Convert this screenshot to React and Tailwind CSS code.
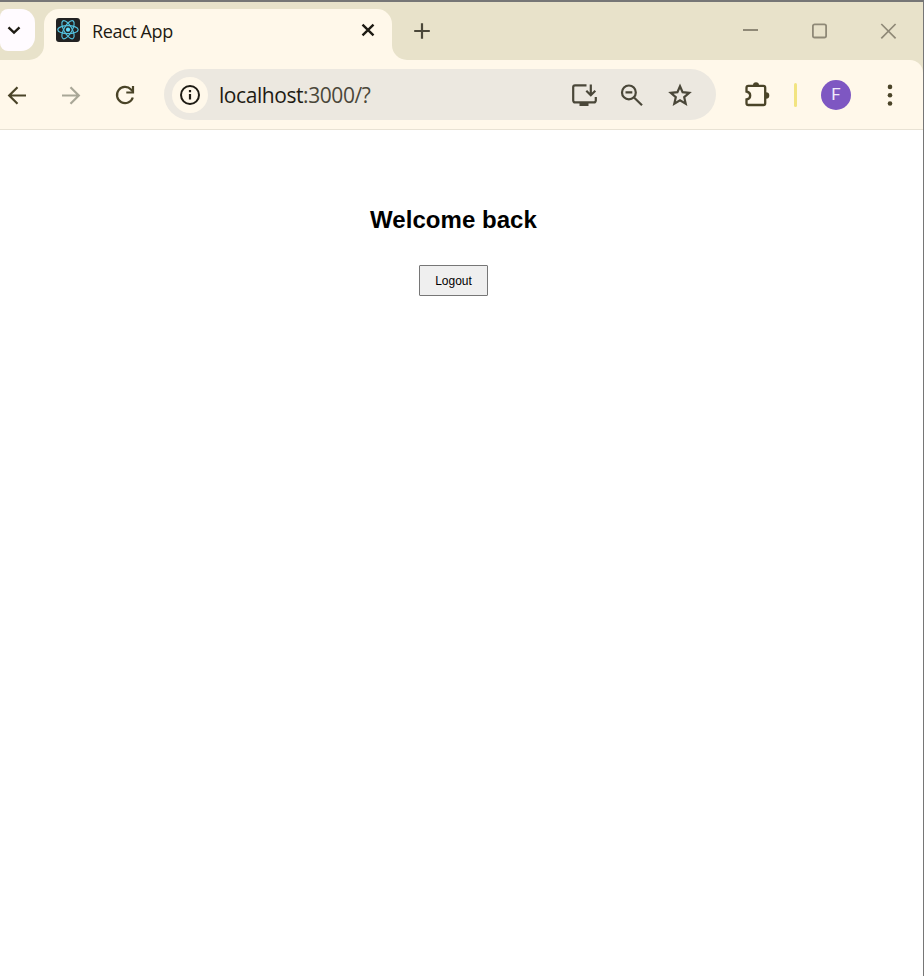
import React from "react";

function Icon({ box, className, children, color = "#4a4428", width = 2.2 }) {
  return (
    <svg
      viewBox={box}
      className={`block shrink-0 ${className}`}
      fill="none"
      stroke={color}
      strokeWidth={width}
    >
      {children}
    </svg>
  );
}

function TabStrip() {
  return (
    <div className="flex h-[58px] bg-[#fff8ea]">
      <div className="w-11 shrink-0 rounded-br-[15px] bg-[#e8e2ca] pt-[7px]">
        <button className="flex h-[42px] w-[35px] items-center rounded-r-[14px] rounded-l-[8px] bg-[#fffbff] pl-[6px]">
          <Icon box="0 0 16 16" className="size-4" color="#1e1b13" width={2.4}>
            <path d="M2.5 5.3 8 10.5l5.5-5.2" />
          </Icon>
        </button>
      </div>
      <div className="w-[348px] shrink-0 bg-[#e8e2ca] pt-[7px]">
        <div className="flex h-[51px] rounded-t-[15px] bg-[#fff8ea] pl-3">
          <div className="mt-[9px] size-6 rounded-[3px] bg-[#222222]">
            <Icon box="0 0 24 24" className="size-6" color="#53c1de" width={1.2}>
              <ellipse cx="12" cy="11.7" rx="10.2" ry="4" />
              <ellipse cx="12" cy="11.7" rx="10.2" ry="4" transform="rotate(60 12 11.7)" />
              <ellipse cx="12" cy="11.7" rx="10.2" ry="4" transform="rotate(120 12 11.7)" />
              <circle cx="12" cy="11.7" r="2.100" fill="#61dafb" stroke="none" />
            </Icon>
          </div>
          <span className="ml-3 mt-2 w-[268px] font-['Open_Sans','Noto_Sans',sans-serif] text-[18px] leading-7 tracking-[-0.4px] text-[#1e1b13]">
            React App
          </span>
          <Icon box="0 0 16 16" className="mt-[13px] size-4" color="#1e1b13" width={2.4}>
            <path d="m2.5 2.7 11 10.6m0-10.6-11 10.6" />
          </Icon>
        </div>
      </div>
      <div className="flex flex-1 rounded-bl-[15px] bg-[#e8e2ca] pl-[21px] pt-5">
        <Icon box="0 0 18 18" className="size-[18px]" color="#4a4739" width={2.2}>
          <path d="M9 1.2v15.6M1.2 9h15.6" />
        </Icon>
        <div className="ml-auto mr-[26px] flex gap-[51px]">
          <Icon box="0 0 18 18" className="size-[18px]" color="#8f8977" width={2}>
            <path d="M2 8h15" />
          </Icon>
          <Icon box="0 0 18 18" className="size-[18px]" color="#8f8977" width={1.8}>
            <rect x="2.9" y="2.3" width="13.2" height="13.2" rx="1.8" />
          </Icon>
          <Icon box="0 0 18 18" className="size-[18px]" color="#8f8977" width={1.7}>
            <path d="m2.300 2 14.3 14.3m0-14.3L2.300 16.300" />
          </Icon>
        </div>
      </div>
    </div>
  );
}

function AddressBar() {
  return (
    <div className="ml-7 flex h-[51px] w-[552px] shrink-0 items-center rounded-full bg-[#ece8e0] pl-2">
      <div className="flex size-9 items-center justify-center rounded-full bg-[#fff8ea]">
        <Icon box="0 0 22 22" className="size-[22px]" color="#1e1b13">
          <circle cx="11" cy="11" r="9" strokeWidth="2" />
          <path d="M11 10v5.500M11 6.100v2.200" />
        </Icon>
      </div>
      <span className="ml-[11px] w-[351px] font-['Open_Sans','Noto_Sans',sans-serif] text-[21px] leading-7 tracking-[-0.43px] text-[#4a4739]">
        <span className="text-[#1e1b13]">localhost</span>:3000/?
      </span>
      <Icon box="0 0 28 26" className="h-[26px] w-7" color="#4a4739">
        <path d="M16.500 3.300H5a1.800 1.800 0 0 0-1.800 1.800v13.500a1.800 1.800 0 0 0 1.800 1.800h19a1.800 1.800 0 0 0 1.800-1.800V15" />
        <path d="M20.800 2.500v10.500M16.300 8.700l4.500 4.500 4.500-4.500" />
        <path d="M9.500 20h9v4h-9z" fill="#4a4739" stroke="none" />
      </Icon>
      <Icon box="0 0 26 26" className="ml-[21px] size-[26px]" color="#4a4739">
        <circle cx="9.900" cy="10.400" r="6.900" />
        <path d="m15 15.500 8 7.800M6.500 10.400h6.800" />
      </Icon>
      <Icon box="0 0 26 26" className="ml-[22px] size-[26px]" color="#4a4739">
        <path
          d="m13 4.200 2.600 6 6.600.6-5 4.400 1.500 6.500-5.700-3.400-5.700 3.400 1.500-6.500-5-4.400 6.600-.6z"
          strokeMiterlimit="10"
        />
      </Icon>
    </div>
  );
}

function Toolbar() {
  return (
    <div className="bg-[#e8e2ca]">
      <div className="flex h-[70px] items-center rounded-tr-[13px] border-b border-[#e8e2d4] bg-[#fff8ea] pl-[7px]">
        <Icon box="0 0 20 20" className="size-5">
          <path d="M19 10.500H2.500M10.500 2.200 2.200 10.500l8.300 8.300" />
        </Icon>
        <Icon box="0 0 20 20" className="ml-[34px] size-5" color="#a9a797">
          <path d="M1 10.500h16.500M9.500 2.200l8.300 8.300-8.300 8.300" />
        </Icon>
        <Icon box="0 0 22 22" className="ml-[33px] size-[22px]">
          <path d="M18.800 13.500A8.100 8.100 0 1 1 17 5.500l2 2" />
          <path d="M19 2v6.500h-6.700" />
        </Icon>
        <AddressBar />
        <Icon box="0 0 28 28" className="ml-[27px] size-7" width={2.300}>
          <path d="M5.300 4.900h15.100a1.800 1.800 0 0 1 1.800 1.800v15.500a1.800 1.800 0 0 1-1.800 1.800H5.300a1.800 1.800 0 0 1-1.800-1.800v-3.700c2.300-.4 3.700-1.900 3.700-4s-1.400-3.600-3.700-4V6.700a1.800 1.800 0 0 1 1.800-1.800Z" />
          <path d="M10 4.300a3 3 0 0 1 6 0ZM23 11.200a3.300 3.300 0 0 1 0 6.600Z" fill="#4a4428" stroke="none" />
        </Icon>
        <div className="ml-[23px] h-6 w-[3px] rounded-full bg-[#f2e481]" />
        <div className="ml-6 flex size-[30px] items-center justify-center rounded-full bg-[#7e57c2] pt-px font-['Roboto',sans-serif] text-[17px] text-[#f0eafa]">
          F
        </div>
        <Icon box="0 0 10 26" className="ml-[34px] h-[26px] w-[10px]">
          <g fill="#4a4428" stroke="none">
            <circle cx="5" cy="4.900" r="2.300" />
            <circle cx="5" cy="13.200" r="2.300" />
            <circle cx="5" cy="21.500" r="2.300" />
          </g>
        </Icon>
      </div>
    </div>
  );
}

export default function App() {
  return (
    <div className="flex h-[976px] w-[924px] flex-col overflow-hidden border-r border-t-2 border-[#767676] bg-white">
      <TabStrip />
      <Toolbar />
      <main className="flex flex-1 flex-col items-center pr-4 pt-[74px] font-['Liberation_Sans',Arial,sans-serif] text-black">
        <h2 className="text-2xl font-bold leading-8 tracking-[0.04px]">Welcome back</h2>
        <button className="mt-[29px] h-[31px] w-[69px] rounded-[1px] border border-[#767676] bg-[#efefef] text-[12px]">
          Logout
        </button>
      </main>
    </div>
  );
}
